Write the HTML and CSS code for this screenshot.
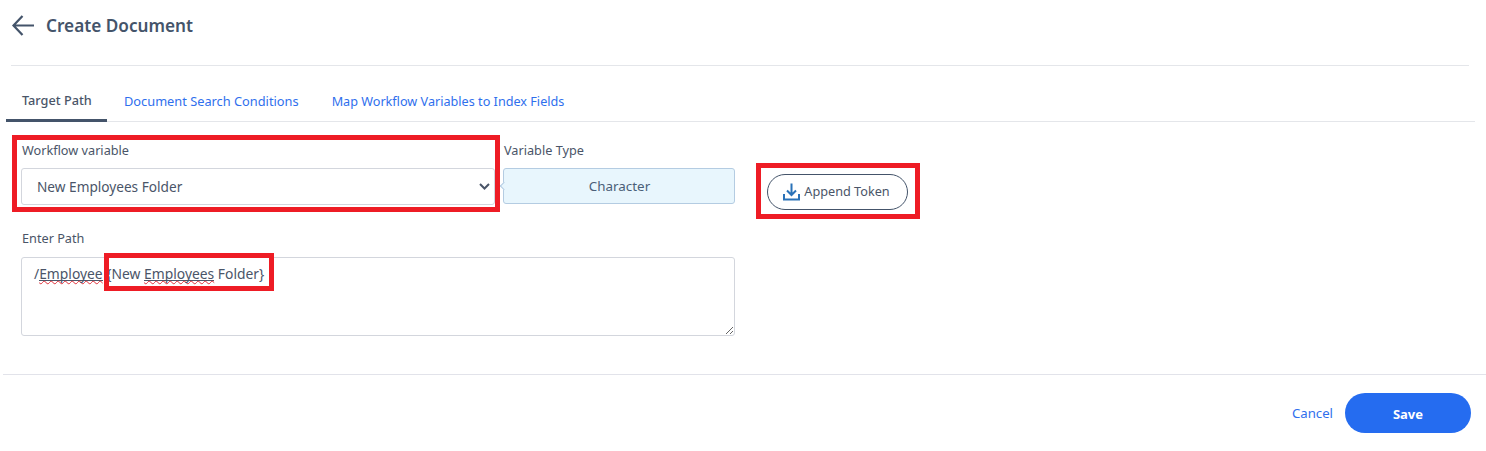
FILE: index.html
```html
<!DOCTYPE html>
<html lang="en">
<head>
<meta charset="utf-8">
<title>Create Document</title>
<link rel="stylesheet" href="styles.css">
</head>
<body>
<div class="page">
  <header class="header">
    <svg class="back" width="24" height="22" viewBox="0 0 24 22" fill="none" stroke="#44546a" stroke-width="2.200">
      <path d="M23 10.500H2.500M11.500 1L2.500 10.500l9 9.500"/>
    </svg>
    <h1 class="title">Create Document</h1>
  </header>
  <nav class="tabs">
    <a class="tab active">Target Path</a>
    <a class="tab">Document Search Conditions</a>
    <a class="tab">Map Workflow Variables to Index Fields</a>
  </nav>
  <section class="form">
    <div class="row">
      <div class="field field-select">
        <label class="label">Workflow variable</label>
        <select class="select"><option>New Employees Folder</option></select>
      </div>
      <div class="field field-type">
        <label class="label">Variable Type</label>
        <div class="type-box">Character</div>
      </div>
      <button class="append">
        <svg width="17" height="18" viewBox="0 0 17 18" fill="none" stroke="#2a72b8" stroke-width="2">
          <path d="M8.500 0.500V11.500M4 7.500L8.500 12l4.500-4.500M1 11v5.500h15V11"/>
        </svg>
        Append Token
      </button>
    </div>
    <div class="field field-path">
      <label class="label">Enter Path</label>
      <div class="path" role="textbox">/<span class="typo">Employee</span> {New <span class="typo">Employees</span> Folder}</div>
    </div>
  </section>
  <footer class="footer">
    <a class="cancel">Cancel</a>
    <button class="save">Save</button>
  </footer>
  <div class="mark mark-select"></div>
  <div class="mark mark-append"></div>
  <div class="mark mark-path"></div>
</div>
</body>
</html>
```
FILE: styles.css
```css
* { box-sizing: border-box; }
html, body { margin: 0; background: #fff; }
body {
  font-family: "Noto Sans", "Open Sans", sans-serif;
  font-size: 12.700px;
  color: #4a5568;
}
.page { position: relative; width: 1486px; height: 451px; overflow: hidden; }
.header {
  height: 66px;
  margin: 0 17px 0 11px;
  padding: 15px 0 0 0;
  display: flex;
  align-items: flex-start;
  gap: 11px;
  border-bottom: 1px solid #e4e6ea;
}
.back { flex: none; }
.title {
  margin: 0;
  font-size: 17.200px;
  line-height: 21px;
  font-weight: 600;
  color: #44546a;
}
.tabs {
  height: 56px;
  margin: 0 11px 0 6px;
  padding-top: 25px;
  display: flex;
  border-bottom: 1px solid #e4e6ea;
}
.tab {
  height: 31px;
  line-height: 21px;
  font-size: 12.800px;
  color: #2f6fed;
  padding: 0 16px 0 17px;
}
.tab + .tab + .tab { font-size: 12.650px; }
.tab.active {
  width: 101px;
  padding: 0 0 0 16px;
  margin-bottom: -1px;
  height: 31px;
  font-size: 12.700px;
  color: #4a5568;
  line-height: 18px;
  border-bottom: 3px solid #44546a;
  font-weight: 500;
}
.form { padding: 18px 0 0 21px; height: 252px; }
.row { display: flex; align-items: flex-start; height: 81px; }
.field { display: flex; flex-direction: column; }
.label { line-height: 20px; margin-bottom: 8px; padding-left: 1px; color: #4a5568; }
.field-select { width: 474px; margin-right: 8px; }
.field-type { width: 232px; margin-right: 32px; }
.select {
  appearance: none;
  height: 37px;
  width: 100%;
  padding: 0 20px 0 15px;
  font: inherit;
  font-size: 13.650px;
  color: #4a5568;
  background: #fff url("data:image/svg+xml,%3Csvg xmlns='http://www.w3.org/2000/svg' width='11' height='7' fill='none' stroke='%234a5568' stroke-width='2'%3E%3Cpath d='M1 1l4.500 4.500L10 1'/%3E%3C/svg%3E") no-repeat right 4px center;
  border: 1px solid #d3d6dd;
  border-radius: 3px;
}
.type-box {
  position: relative;
  height: 36px;
  line-height: 34px;
  padding-left: 1px;
  text-align: center;
  font-size: 13.400px;
  color: #4a5f78;
  background: #e8f6fd;
  border: 1px solid #b4cce2;
  border-radius: 3px;
}
.type-box::before {
  content: "";
  position: absolute;
  left: -3px;
  top: 14px;
  width: 5px;
  height: 5px;
  background: #e8f6fd;
  border-left: 1px solid #b4cce2;
  border-bottom: 1px solid #b4cce2;
  transform: rotate(45deg);
}
.append {
  margin-top: 34px;
  width: 141px;
  height: 36px;
  padding: 0 2px 3px 0;
  display: flex;
  align-items: center;
  justify-content: center;
  gap: 4px;
  font: inherit;
  color: #4a5568;
  background: #fff;
  border: 1px solid #44546a;
  border-radius: 18px;
}
.append svg { position: relative; top: 1px; }
.field-path { width: 714px; margin-top: 7px; }
.field-path .label { margin-bottom: 9px; }
.path {
  height: 79px;
  padding: 6px 12px;
  font-size: 13.850px;
  line-height: 20px;
  color: #4a5568;
  border: 1px solid #d3d6dd;
  border-radius: 3px;
  overflow: auto;
  resize: both;
}
.typo {
  text-decoration: underline wavy #e0303a 1px;
  text-decoration-skip-ink: none;
  text-underline-offset: 1px;
  background: linear-gradient(#4a5568, #4a5568) 0 16px / 100% 1px no-repeat;
}
.footer {
  height: 77px;
  margin-left: 3px;
  padding: 18px 15px 0 0;
  display: flex;
  justify-content: flex-end;
  align-items: flex-start;
  gap: 12px;
  border-top: 1px solid #e2e3ea;
}
.cancel { color: #2f6fed; font-size: 13.200px; line-height: 40px; }
.save {
  width: 126px;
  height: 40px;
  padding: 1px 0 0;
  font: inherit;
  font-size: 13px;
  font-weight: 700;
  color: #fff;
  background: #256cf0;
  border: 0;
  border-radius: 20px;
}
.mark { position: absolute; border: 5px solid #ee1c25; pointer-events: none; }
.mark-select { left: 12px; top: 135px; width: 488px; height: 77px; }
.mark-append { left: 756px; top: 163px; width: 164px; height: 56px; }
.mark-path { left: 104px; top: 253px; width: 170px; height: 38px; }
```
